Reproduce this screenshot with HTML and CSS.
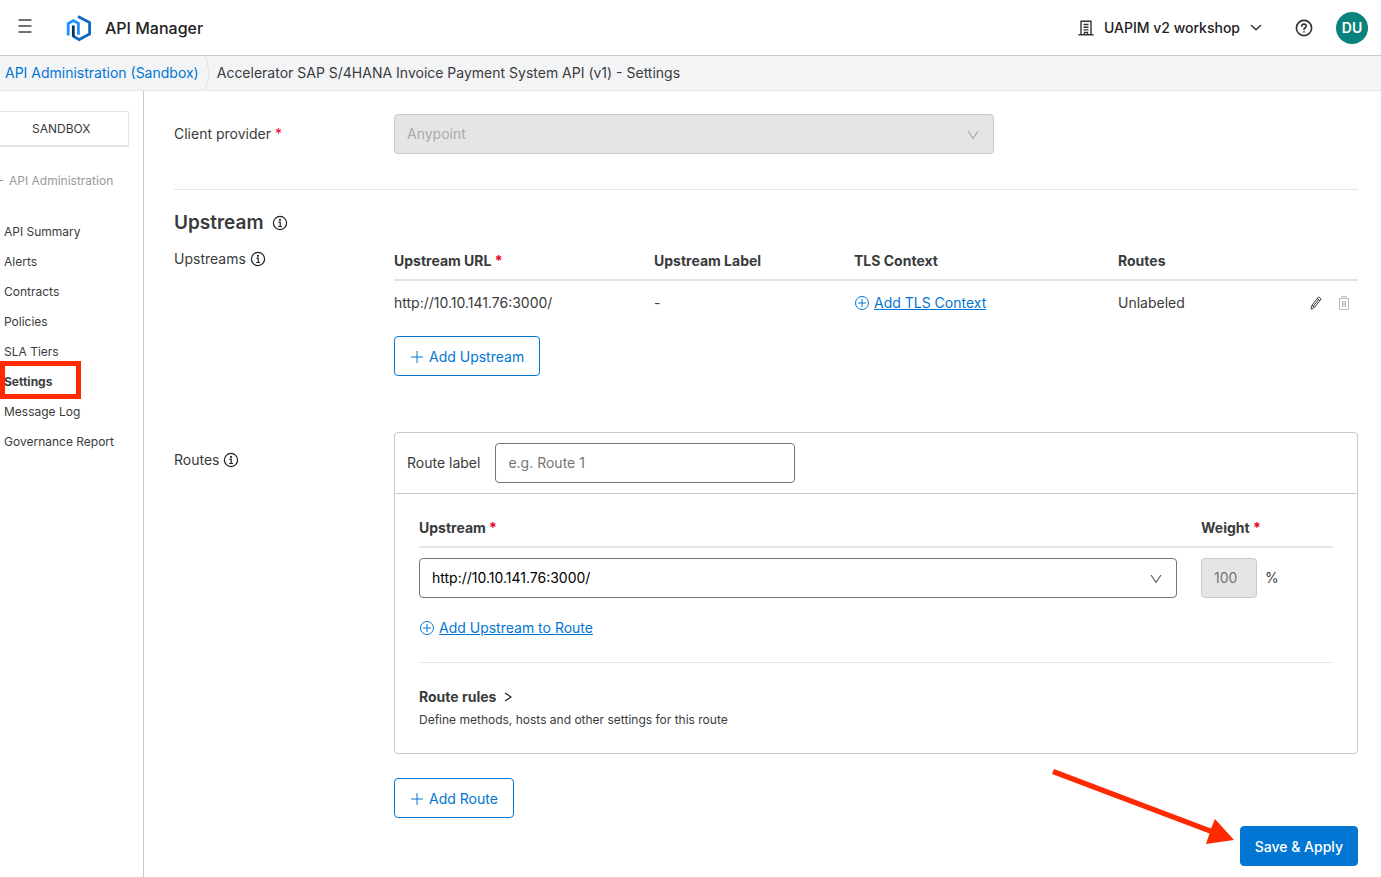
FILE: index.html
```html
<!DOCTYPE html>
<html lang="en">
<head>
    <meta charset="UTF-8">
    <meta name="viewport" content="width=device-width, initial-scale=1.0">
    <title>API Manager - Settings</title>
    <link rel="stylesheet" href="styles.css">
</head>
<body>
    <header class="topbar">
        <button type="button" class="icon-btn menu-btn" aria-label="Menu">
            <svg width="14" height="14" viewBox="0 0 14 14" fill="none" stroke="#444" stroke-width="1.4" stroke-linecap="round"><path d="M1 1H13M1 7H13M1 13H13"/></svg>
        </button>
        <a href="#" class="brand">
            <svg width="26" height="28" viewBox="0 0 26 28" fill="none" stroke-width="2.8">
                <path d="M2.2 21.4V9.6L7.4 6.6L12.4 9.4V20.8" stroke="#1e90ff"/>
                <path d="M12 2.4L23.6 8.6V20L13.2 25.6L7 22" stroke="#1168c0"/>
                <path d="M7.3 11.5V22.6" stroke="#0a2f5c"/>
            </svg>
            <span>API Manager</span>
        </a>
        <div class="topbar-right">
            <button type="button" class="org-btn">
                <svg width="16" height="16" viewBox="0 0 16 16" fill="none" stroke="#333" stroke-width="1.4"><path d="M0.5 14.7H15.5M3 14.5V1.2H13V14.5M5.5 4.5H10.5M5.5 7.2H10.5M5.5 9.9H10.5M6.5 14.5V12.4H9.5V14.5"/></svg>
                <span>UAPIM v2 workshop</span>
                <svg width="12" height="8" viewBox="0 0 12 8" fill="none" stroke="#333" stroke-width="1.5" stroke-linecap="round"><path d="M1.5 1.5L6 5.8L10.5 1.5"/></svg>
            </button>
            <button type="button" class="icon-btn" aria-label="Help">
                <svg width="18" height="18" viewBox="0 0 18 18" fill="none" stroke="#333" stroke-width="1.6" stroke-linecap="round"><circle cx="9" cy="9" r="7.6"/><path d="M6.8 7.2C6.8 4.4 11.2 4.5 11.2 7.1C11.2 8.7 9 8.8 9 10.4"/><path d="M9 12.9V13"/></svg>
            </button>
            <button type="button" class="avatar">DU</button>
        </div>
    </header>

    <nav class="breadcrumb" aria-label="Breadcrumb">
        <a href="#">API Administration (Sandbox)</a>
        <svg width="6" height="34" viewBox="0 0 6 34" fill="none" stroke="#dfe1e4"><path d="M0.5 0L4.5 17L0.5 34"/></svg>
        <span>Accelerator SAP S/4HANA Invoice Payment System API (v1) - Settings</span>
    </nav>

    <div class="layout">
        <aside class="sidebar">
            <button type="button" class="env-btn">SANDBOX</button>
            <a href="#" class="back-link">
                <svg width="3" height="10" viewBox="0 0 3 10" stroke="#999"><path d="M0 4.5H3"/></svg>
                API Administration
            </a>
            <ul class="side-nav">
                <li><a href="#">API Summary</a></li>
                <li><a href="#">Alerts</a></li>
                <li><a href="#">Contracts</a></li>
                <li><a href="#">Policies</a></li>
                <li><a href="#">SLA Tiers</a></li>
                <li class="active"><a href="#">Settings</a><span class="highlight"></span></li>
                <li><a href="#">Message Log</a></li>
                <li><a href="#">Governance Report</a></li>
            </ul>
        </aside>

        <main class="content">
            <div class="form-row provider-row">
                <label for="provider">Client provider <span class="required">*</span></label>
                <div class="select-wrap provider-select">
                    <select id="provider" disabled>
                        <option>Anypoint</option>
                    </select>
                    <svg class="arrow" width="12" height="10" viewBox="0 0 12 10" fill="none" stroke="#aaa" stroke-width="1.2"><path d="M1 1L6 8.4L11 1"/></svg>
                </div>
            </div>

            <hr>

            <h2>Upstream
                <svg class="info" width="16" height="16" viewBox="0 0 16 16" fill="none" stroke="#222" stroke-width="1.2"><circle cx="8" cy="8" r="6.6"/><path d="M6.4 7.2H8.2V11.4M6.2 11.5H10"/><circle cx="8" cy="4.8" r="0.5" fill="#222"/></svg>
            </h2>

            <div class="form-row">
                <div class="row-label">Upstreams
                    <svg class="info" width="16" height="16" viewBox="0 0 16 16" fill="none" stroke="#222" stroke-width="1.2"><circle cx="8" cy="8" r="6.6"/><path d="M6.4 7.2H8.2V11.4M6.2 11.5H10"/><circle cx="8" cy="4.8" r="0.5" fill="#222"/></svg>
                </div>
                <div>
                    <table class="upstream-table">
                        <thead>
                            <tr>
                                <th class="col-url">Upstream URL <span class="required">*</span></th>
                                <th class="col-label">Upstream Label</th>
                                <th class="col-tls">TLS Context</th>
                                <th>Routes</th>
                                <th class="col-actions"></th>
                            </tr>
                        </thead>
                        <tbody>
                            <tr>
                                <td>http://10.10.141.76:3000/</td>
                                <td>-</td>
                                <td>
                                    <a href="#" class="add-link">
                                        <svg width="16" height="16" viewBox="0 0 16 16" fill="none" stroke="#0176d3"><circle cx="8" cy="8" r="6.5"/><path d="M8 4V12M4 8H12"/></svg>
                                        <span>Add TLS Context</span>
                                    </a>
                                </td>
                                <td>Unlabeled</td>
                                <td>
                                    <div class="actions">
                                        <button type="button" class="icon-btn" aria-label="Edit upstream">
                                            <svg width="16" height="16" viewBox="0 0 16 16" fill="none" stroke="#444"><path d="M3 14.2L4 10.2L10.6 1.9L13.2 4L6.6 12.3ZM4 10.2L6.6 12.3M9.2 3.6L11.9 5.7M5.3 11.2L10.5 4.7"/></svg>
                                        </button>
                                        <button type="button" class="icon-btn" aria-label="Delete upstream" disabled>
                                            <svg width="16" height="16" viewBox="0 0 16 16" fill="none" stroke="#bbb"><path d="M2.5 3.5H13.5M6 3.5V1.5H10V3.5M3.5 3.5V14.5H12.5V3.5M6.500 6V12M8 6V12M9.5 6V12"/></svg>
                                        </button>
                                    </div>
                                </td>
                            </tr>
                        </tbody>
                    </table>
                    <button type="button" class="btn btn-outline">
                        <svg width="14" height="14" viewBox="0 0 14 14" stroke="#0176d3"><path d="M7 1V13M1 7H13"/></svg>
                        Add Upstream
                    </button>
                </div>
            </div>

            <div class="form-row routes-row">
                <div class="row-label">Routes
                    <svg class="info" width="16" height="16" viewBox="0 0 16 16" fill="none" stroke="#222" stroke-width="1.2"><circle cx="8" cy="8" r="6.6"/><path d="M6.4 7.2H8.2V11.4M6.2 11.5H10"/><circle cx="8" cy="4.8" r="0.5" fill="#222"/></svg>
                </div>
                <div>
                    <section class="route-card">
                        <div class="route-head">
                            <label for="route-label">Route label</label>
                            <input type="text" id="route-label" placeholder="e.g. Route 1">
                        </div>
                        <div class="route-body">
                            <div class="route-grid route-grid-head">
                                <label for="route-upstream">Upstream <span class="required">*</span></label>
                                <label for="route-weight">Weight <span class="required">*</span></label>
                            </div>
                            <div class="route-grid">
                                <div class="select-wrap">
                                    <select id="route-upstream">
                                        <option>http://10.10.141.76:3000/</option>
                                    </select>
                                    <svg class="arrow" width="12" height="10" viewBox="0 0 12 10" fill="none" stroke="#666" stroke-width="1.2"><path d="M1 1L6 8.4L11 1"/></svg>
                                </div>
                                <div class="weight">
                                    <input type="text" id="route-weight" value="100" disabled>
                                    <span>%</span>
                                </div>
                            </div>
                            <a href="#" class="add-link">
                                <svg width="16" height="16" viewBox="0 0 16 16" fill="none" stroke="#0176d3"><circle cx="8" cy="8" r="6.5"/><path d="M8 4V12M4 8H12"/></svg>
                                <span>Add Upstream to Route</span>
                            </a>
                            <hr>
                            <button type="button" class="rules-btn">Route rules
                                <svg width="8" height="10" viewBox="0 0 8 10" fill="none" stroke="#222" stroke-width="1.2"><path d="M1 1L7 5L1 9"/></svg>
                            </button>
                            <p class="hint">Define methods, hosts and other settings for this route</p>
                        </div>
                    </section>
                    <button type="button" class="btn btn-outline">
                        <svg width="14" height="14" viewBox="0 0 14 14" stroke="#0176d3"><path d="M7 1V13M1 7H13"/></svg>
                        Add Route
                    </button>
                </div>
            </div>

            <div class="form-footer">
                <div class="save-wrap">
                    <svg class="pointer" width="182" height="78" viewBox="0 0 182 78" fill="#ff2a00"><path d="M2 0L159 59.5L163 50L182 71L154 75L157.5 64.5L0 5Z"/></svg>
                    <button type="button" class="btn btn-primary">Save &amp; Apply</button>
                </div>
            </div>
        </main>
    </div>
</body>
</html>
```
FILE: styles.css
```css
:root {
    --blue: #0176d3;
    --text: #3a3b3c;
    --border: #c9c9c9;
    --line: #e5e5e5;
    --red: #ea001e;
    --mark: #ff2a00;
}

* {
    margin: 0;
    padding: 0;
    box-sizing: border-box;
}

body {
    display: flex;
    flex-direction: column;
    min-height: 100vh;
    background-color: #fff;
    color: var(--text);
    font-family: Inter, "Liberation Sans", sans-serif;
    font-size: 14px;
    line-height: 20px;
}

button,
input,
select {
    font: inherit;
    color: inherit;
}

button {
    border: none;
    background: none;
    cursor: pointer;
}

a {
    color: var(--blue);
    text-decoration: none;
}

svg {
    display: block;
    flex: none;
}

hr {
    border: none;
    border-top: 1px solid var(--line);
}

.required {
    color: var(--red);
}

.icon-btn {
    display: flex;
}

/* Top bar */
.topbar {
    display: flex;
    align-items: center;
    height: 56px;
    padding: 0 13px 0 18px;
    border-bottom: 1px solid var(--border);
}

.menu-btn {
    padding-bottom: 4px;
}

.brand {
    display: flex;
    align-items: center;
    gap: 13px;
    margin-left: 34px;
    color: #222;
    font-size: 16px;
    font-weight: 500;
}

.topbar-right {
    display: flex;
    align-items: center;
    gap: 23px;
    margin-left: auto;
}

.org-btn {
    display: flex;
    align-items: center;
    gap: 10px;
    margin-right: 10px;
    color: #222;
    font-weight: 500;
}

.avatar {
    width: 32px;
    height: 32px;
    border-radius: 50%;
    background-color: #0b827c;
    color: #fff;
    font-weight: 600;
}

/* Breadcrumb */
.breadcrumb {
    display: flex;
    align-items: center;
    height: 35px;
    padding-left: 5px;
    gap: 6px;
    background-color: #f3f4f6;
    border-bottom: 1px solid var(--line);
}

/* Sidebar */
.layout {
    display: flex;
    flex: 1;
}

.sidebar {
    flex: none;
    width: 144px;
    padding-top: 20px;
    border-right: 1px solid var(--border);
    font-size: 12px;
}

.env-btn {
    display: block;
    width: 129px;
    height: 36px;
    padding-left: 32px;
    border: 1px solid var(--line);
    border-bottom-width: 2px;
    border-left: none;
    text-align: left;
}

.back-link {
    display: flex;
    align-items: center;
    gap: 6px;
    margin: 24px 0;
    color: #999;
}

.side-nav {
    list-style: none;
    padding-top: 2px;
    line-height: 30px;
}

.side-nav li {
    position: relative;
    padding-left: 4px;
}

.side-nav a {
    color: var(--text);
}

.side-nav .active {
    font-weight: 700;
}

.highlight {
    position: absolute;
    top: -6px;
    left: 0;
    width: 81px;
    height: 38px;
    border: 5px solid var(--mark);
}

/* Content */
.content {
    flex: 1;
    min-width: 0;
    padding: 23px 23px 11px 30px;
}

.form-row {
    display: grid;
    grid-template-columns: 220px minmax(0, 1fr);
}

.provider-row {
    align-items: center;
    margin-bottom: 35px;
}

.provider-select {
    max-width: 600px;
}

h2 {
    display: flex;
    align-items: center;
    gap: 8px;
    margin: 19px 0 6px;
    font-size: 19px;
    line-height: 28px;
    font-weight: 600;
}

.row-label {
    display: flex;
    align-items: center;
    align-self: start;
    gap: 4px;
    padding-top: 6px;
}

.select-wrap {
    position: relative;
}

.select-wrap .arrow {
    position: absolute;
    top: 16px;
    right: 15px;
    pointer-events: none;
}

select,
input {
    height: 40px;
    padding: 0 12px;
    border: 1px solid #747474;
    border-radius: 4px;
    background-color: #fff;
    color: #000;
}

input {
    padding-bottom: 2px;
}

select {
    width: 100%;
    appearance: none;
}

select:disabled,
input:disabled {
    border-color: var(--border);
    background-color: #e5e5e5;
    color: #aaa;
    opacity: 1;
}

input:disabled {
    color: #747474;
}

input::placeholder {
    color: #747474;
}

.upstream-table {
    width: 100%;
    margin-bottom: 11px;
    border-collapse: collapse;
    table-layout: fixed;
    text-align: left;
}

.upstream-table th {
    padding: 8px 0;
    border-bottom: 2px solid var(--line);
    font-weight: 700;
}

.upstream-table td {
    padding: 12px 0;
}

.col-url {
    width: 260px;
}

.col-label {
    width: 200px;
}

.col-tls {
    width: 264px;
}

.col-actions {
    width: 60px;
}

.actions {
    display: flex;
    justify-content: flex-end;
    gap: 12px;
    padding-right: 6px;
}

.add-link {
    display: flex;
    align-items: center;
    gap: 4px;
}

.add-link span {
    text-decoration: underline;
}

.btn {
    display: flex;
    align-items: center;
    gap: 5px;
    height: 40px;
    padding: 2px 15px 0;
    border: 1px solid var(--blue);
    border-radius: 4px;
    color: var(--blue);
}

.btn-primary {
    padding: 2px 14px 0;
    background-color: var(--blue);
    color: #fff;
    font-weight: 500;
}

/* Routes */
.routes-row {
    margin-top: 56px;
}

.routes-row .row-label {
    padding-top: 18px;
}

.route-card {
    margin-bottom: 24px;
    border: 1px solid var(--border);
    border-radius: 4px;
}

.route-head {
    display: flex;
    align-items: center;
    gap: 15px;
    padding: 10px 12px;
    border-bottom: 1px solid var(--border);
}

.route-head input {
    width: 300px;
}

.route-body {
    padding: 24px;
}

.route-grid {
    display: grid;
    grid-template-columns: minmax(0, 1fr) 132px;
    column-gap: 24px;
    margin-bottom: 20px;
}

.route-grid-head {
    margin-bottom: 10px;
    padding-bottom: 8px;
    border-bottom: 2px solid var(--line);
    font-weight: 700;
}

.weight {
    display: flex;
    align-items: center;
    gap: 8px;
}

.weight input {
    width: 56px;
}

.route-body hr {
    margin: 24px 0;
}

.rules-btn {
    display: flex;
    align-items: center;
    gap: 8px;
    font-weight: 700;
}

.hint {
    margin-top: 4px;
    font-size: 12px;
    line-height: 18px;
}

.form-footer {
    display: flex;
    justify-content: flex-end;
    margin-top: 8px;
}

.save-wrap {
    position: relative;
}

.pointer {
    position: absolute;
    right: calc(100% + 6px);
    bottom: 19px;
    pointer-events: none;
}
```
